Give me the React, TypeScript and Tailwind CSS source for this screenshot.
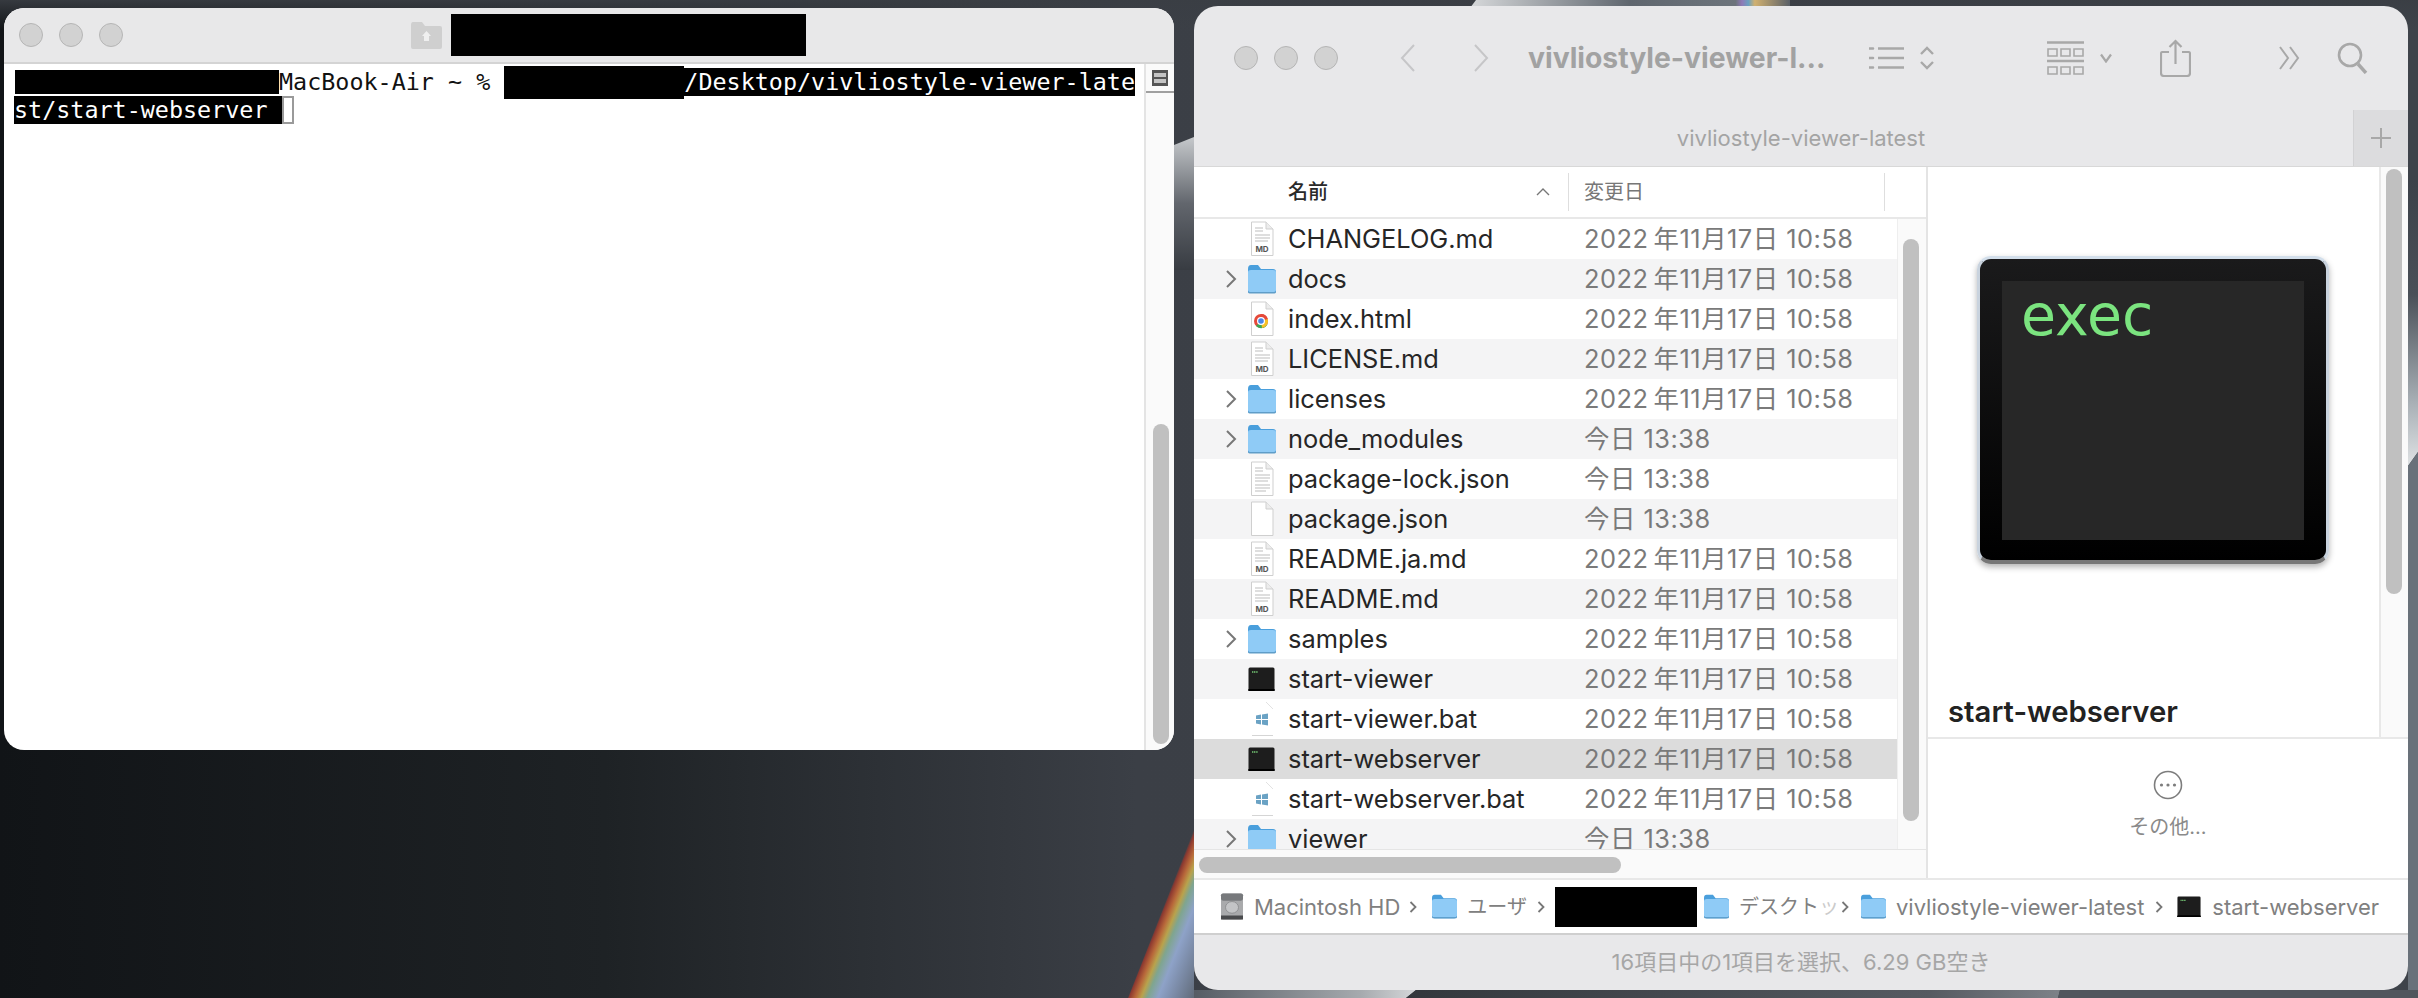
import React from "react";

type RowKind = "md" | "folder" | "html" | "lock" | "blank" | "term" | "bat";

interface Row {
    name: string;
    date: string;
    kind: RowKind;
}

const OLD = "2022\u2009年11月17日 10:58";
const TODAY = "今日 13:38";

const rows: Row[] = [
    {name: "CHANGELOG.md", date: OLD, kind: "md"},
    {name: "docs", date: OLD, kind: "folder"},
    {name: "index.html", date: OLD, kind: "html"},
    {name: "LICENSE.md", date: OLD, kind: "md"},
    {name: "licenses", date: OLD, kind: "folder"},
    {name: "node_modules", date: TODAY, kind: "folder"},
    {name: "package-lock.json", date: TODAY, kind: "lock"},
    {name: "package.json", date: TODAY, kind: "blank"},
    {name: "README.ja.md", date: OLD, kind: "md"},
    {name: "README.md", date: OLD, kind: "md"},
    {name: "samples", date: OLD, kind: "folder"},
    {name: "start-viewer", date: OLD, kind: "term"},
    {name: "start-viewer.bat", date: OLD, kind: "bat"},
    {name: "start-webserver", date: OLD, kind: "term"},
    {name: "start-webserver.bat", date: OLD, kind: "bat"},
    {name: "viewer", date: TODAY, kind: "folder"},
];

const Wallpaper = () => (
    <svg className="absolute inset-0" width="2418" height="998" viewBox="0 0 2418 998">
        <defs>
            <linearGradient id="base" x1="0" y1="0" x2="1" y2="0">
                <stop offset="0" stopColor="#111417"/>
                <stop offset="0.25" stopColor="#1e2225"/>
                <stop offset="0.47" stopColor="#3b3f46"/>
                <stop offset="1" stopColor="#3e434a"/>
            </linearGradient>
            <linearGradient id="topFade" x1="0" y1="0" x2="0" y2="1">
                <stop offset="0" stopColor="#3a3e44" stopOpacity="0.9"/>
                <stop offset="1" stopColor="#3a3e44" stopOpacity="0"/>
            </linearGradient>
            <linearGradient id="wedge" x1="0" y1="0" x2="0" y2="1">
                <stop offset="0" stopColor="#c6c9cc"/>
                <stop offset="0.5" stopColor="#62666d"/>
                <stop offset="1" stopColor="#383c42"/>
            </linearGradient>
            <linearGradient id="bow" gradientUnits="userSpaceOnUse" x1="1126" y1="998" x2="1191" y2="1024">
                <stop offset="0" stopColor="#3b3f46"/>
                <stop offset="0.04" stopColor="#8f3a30"/>
                <stop offset="0.12" stopColor="#b8683a"/>
                <stop offset="0.2" stopColor="#b9a24c"/>
                <stop offset="0.28" stopColor="#7fa58f"/>
                <stop offset="0.42" stopColor="#8ea2c8"/>
                <stop offset="1" stopColor="#586069"/>
            </linearGradient>
            <linearGradient id="rightBand" x1="0" y1="0" x2="0" y2="1">
                <stop offset="0" stopColor="#3c4149"/>
                <stop offset="0.4" stopColor="#4a5058"/>
                <stop offset="0.78" stopColor="#a9b0b6"/>
                <stop offset="1" stopColor="#dfe2e4"/>
            </linearGradient>
            <linearGradient id="bottomLight" x1="0" y1="0" x2="1" y2="0">
                <stop offset="0" stopColor="#565c64"/>
                <stop offset="0.75" stopColor="#a6aaae"/>
                <stop offset="1" stopColor="#d5d7d9"/>
            </linearGradient>
            <linearGradient id="bottomDark" x1="0" y1="0" x2="1" y2="0">
                <stop offset="0" stopColor="#33373c"/>
                <stop offset="0.8" stopColor="#555a61"/>
                <stop offset="1" stopColor="#7d8288"/>
            </linearGradient>
            <linearGradient id="topStreak" x1="0" y1="0" x2="1" y2="0">
                <stop offset="0" stopColor="#d6d8da"/>
                <stop offset="0.5" stopColor="#5f666e"/>
                <stop offset="0.83" stopColor="#6d747c"/>
                <stop offset="0.85" stopColor="#8f7ab8"/>
                <stop offset="0.87" stopColor="#6aa0c0"/>
                <stop offset="0.89" stopColor="#d0b070"/>
                <stop offset="1" stopColor="#5a6068"/>
            </linearGradient>
        </defs>
        <rect width="2418" height="998" fill="url(#base)"/>
        <rect width="2418" height="30" fill="url(#topFade)"/>
        <polygon points="1470,8 1476,0 1790,0 1790,8" fill="url(#topStreak)"/>
        <polygon points="1174,145 1194,137 1194,270 1174,270" fill="url(#wedge)"/>
        <polygon points="1194,830 1194,998 1128,998" fill="url(#bow)"/>
        <polygon points="2408,180 2418,180 2418,452 2408,466" fill="url(#rightBand)"/>
        <polygon points="2408,466 2418,452 2418,998 2408,998" fill="#69717a"/>
        <polygon points="1194,990 1416,990 1406,998 1194,998" fill="url(#bottomLight)"/>
        <polygon points="1416,990 2060,990 2058,998 1406,998" fill="url(#bottomDark)"/>
        <polygon points="2060,990 2408,990 2418,990 2418,998 2058,998" fill="#50565d"/>
    </svg>
);

const Lights = () => (
    <div className="flex gap-[16px]">
        <div className="h-[24px] w-[24px] rounded-full border border-[#b5b5b5] bg-[#d2d2d2]"/>
        <div className="h-[24px] w-[24px] rounded-full border border-[#b5b5b5] bg-[#d2d2d2]"/>
        <div className="h-[24px] w-[24px] rounded-full border border-[#b5b5b5] bg-[#d2d2d2]"/>
    </div>
);

const PageShape = ({children}: { children?: React.ReactNode }) => (
    <svg width="27" height="36" viewBox="0 0 27 36">
        <path d="M3.5 1H18L25 8V34.5H3.5Z" fill="#fff" stroke="#cfcfcf" strokeWidth="1"/>
        <path d="M18 1V8H25" fill="#ececec" stroke="#cfcfcf" strokeWidth="1"/>
        {children}
    </svg>
);

const Lines = ({dense}: { dense?: boolean }) => (
    <g stroke="#bdbdbd" strokeWidth="1">
        <path d="M7 7H15M7 10H15"/>
        <path d="M7 14H22M7 17H22M7 20H20"/>
        {dense && <path d="M7 24H22M7 27H22M7 30H18"/>}
    </g>
);

const FileIcon = ({kind}: { kind: RowKind }) => {
    if (kind === "folder") return <FolderIcon/>;
    if (kind === "term") return <TermIcon w={27} h={24}/>;
    if (kind === "md") {
        return (
            <PageShape>
                <Lines/>
                <text x="14" y="31" fontSize="8" fontWeight="700" textAnchor="middle" fill="#555"
                      fontFamily="Inter, sans-serif">MD</text>
            </PageShape>
        );
    }
    if (kind === "lock") {
        return <PageShape><Lines dense/></PageShape>;
    }
    if (kind === "html") {
        return (
            <PageShape>
                <circle cx="13" cy="20" r="7" fill="#e5493a"/>
                <path d="M13 20L19.5 23A7 7 0 0 1 8 25Z" fill="#3aa757"/>
                <path d="M13 13A7 7 0 0 1 19.8 18L13 20Z" fill="#e5493a"/>
                <path d="M19.8 18A7 7 0 0 1 14 27L13 20Z" fill="#f6c026"/>
                <circle cx="13" cy="20" r="3.4" fill="#4a86e8" stroke="#fff" strokeWidth="1.2"/>
            </PageShape>
        );
    }
    if (kind === "bat") {
        return (
            <svg width="27" height="36" viewBox="0 0 27 36">
                <path d="M3.5 1H18L25 8V34.5H3.5Z" fill="#fff"/>
                <path d="M18 1L25 8" stroke="#e2e2e2"/>
                <path d="M4 34.5H25" stroke="#d5d5d5"/>
                <path d="M8 14.5L13 13.6V18H8ZM14 13.4L20 12.4V18H14ZM8 19H13V23.4L8 22.5ZM14 19H20V24.6L14 23.6Z"
                      fill="#6aa2c4"/>
            </svg>
        );
    }
    return <PageShape/>;
};

const FolderIcon = ({w = 28, h = 30}: { w?: number; h?: number }) => (
    <svg width={w} height={h} viewBox="0 0 28 30" preserveAspectRatio="none">
        <path d="M0 5Q0 1 3 1H10L13 5H25Q28 5 28 8V27Q28 29 25 29H3Q0 29 0 27Z" fill="#4a9fdc"/>
        <path d="M0 8Q0 6 3 6H25Q28 6 28 8V26Q28 28 25 28H3Q0 28 0 26Z" fill="#8fcbf6"/>
        <path d="M0 26.5Q0 28 3 28H25Q28 28 28 26.5V28Q28 29.5 25 29.5H3Q0 29.5 0 28Z" fill="#5f9dc8"/>
    </svg>
);

const TermIcon = ({w, h}: { w: number; h: number }) => (
    <svg width={w} height={h} viewBox="0 0 27 24" preserveAspectRatio="none">
        <rect x="0.5" y="0.5" width="26" height="22.5" rx="1.5" fill="#1d1d1d"/>
        <rect x="0" y="22" width="27" height="2" rx="1" fill="#000"/>
        <path d="M4 5H10" stroke="#74c874" strokeWidth="1.6" strokeDasharray="1.2 .6"/>
    </svg>
);

const Chevron = ({color = "#777"}: { color?: string }) => (
    <svg width="12" height="20" viewBox="0 0 12 20" fill="none">
        <path d="M2 2L10 10L2 18" stroke={color} strokeWidth="2"/>
    </svg>
);

const PathSep = ({ml}: { ml: string }) => (
    <svg className={ml} width="8" height="14" viewBox="0 0 8 14" fill="none">
        <path d="M1.5 2L6.5 7L1.5 12" stroke="#777" strokeWidth="1.8"/>
    </svg>
);

const Toolbar = () => (
    <div className="flex h-[104px] shrink-0 items-center pl-[40px] text-[#a8a8a8]">
        <Lights/>
        <svg className="ml-[61px]" width="18" height="28" viewBox="0 0 18 28" fill="none">
            <path d="M15 1L3 14L15 27" stroke="#c6c6c8" strokeWidth="2"/>
        </svg>
        <svg className="ml-[55px]" width="18" height="28" viewBox="0 0 18 28" fill="none">
            <path d="M3 1L15 14L3 27" stroke="#c6c6c8" strokeWidth="2"/>
        </svg>
        <div
            className="ml-[38px] w-[299px] whitespace-nowrap text-[28.3px] font-bold leading-none text-[#a2a2a2]">
            vivliostyle-viewer-l...
        </div>
        <svg className="ml-[42px]" width="35" height="24" viewBox="0 0 35 24" fill="none">
            <g stroke="#a8a8a8" strokeWidth="2.6">
                <path d="M9 2.5H35M9 12H35M9 21.5H35"/>
                <path d="M0 2.5H4M0 12H4M0 21.5H4" strokeLinecap="round"/>
            </g>
        </svg>
        <svg className="ml-[15px]" width="16" height="24" viewBox="0 0 16 24" fill="none">
            <path d="M2 8L8 2L14 8M2 16L8 22L14 16" stroke="#a8a8a8" strokeWidth="2.4"/>
        </svg>
        <svg className="ml-[112px]" width="37" height="34" viewBox="0 0 37 34" fill="none" stroke="#a8a8a8">
            <path d="M0 1.5H37M0 20H37" strokeWidth="2.4"/>
            <path
                d="M1 8h9v7H1zM14 8h9v7h-9zM27 8h9v7h-9zM1 26h9v7H1zM14 26h9v7h-9zM27 26h9v7h-9z"
                strokeWidth="1.6"/>
        </svg>
        <svg className="ml-[16px]" width="12" height="10" viewBox="0 0 12 10" fill="none">
            <path d="M1 1.5L6 8.5L11 1.5" stroke="#a8a8a8" strokeWidth="2.2"/>
        </svg>
        <svg className="ml-[48px]" width="31" height="38" viewBox="0 0 31 38" fill="none" stroke="#a8a8a8"
             strokeWidth="2.2">
            <path d="M9 13H2Q1 13 1 15V34Q1 37 4 37H27Q30 37 30 34V15Q30 13 29 13H22"/>
            <path d="M15.5 25V2M9.5 8L15.5 2L21.5 8"/>
        </svg>
        <svg className="ml-[87px]" width="24" height="24" viewBox="0 0 24 24" fill="none">
            <path d="M2 1L10 12L2 23M12 1L20 12L12 23" stroke="#a8a8a8" strokeWidth="2"/>
        </svg>
        <svg className="ml-[35px]" width="31" height="32" viewBox="0 0 31 32" fill="none" stroke="#a8a8a8"
             strokeWidth="2.6">
            <circle cx="13" cy="13" r="11"/>
            <path d="M21 22L29 31" strokeWidth="3.4"/>
        </svg>
    </div>
);

const TabBar = () => (
    <div className="flex h-[56px] shrink-0">
        <div className="flex flex-1 items-center justify-center pl-[55px] text-[22px] text-[#a4a4a4]">
            vivliostyle-viewer-latest
        </div>
        <div className="flex w-[55px] items-center justify-center border-l border-[#d2d2d4] bg-[#dcdcde]">
            <svg width="22" height="22" viewBox="0 0 22 22" fill="none">
                <path d="M11 1V21M1 11H21" stroke="#a8a8a8" strokeWidth="2"/>
            </svg>
        </div>
    </div>
);

const FileList = () => (
    <div className="flex w-[732px] shrink-0 flex-col">
        <div className="flex h-[52px] shrink-0 items-center border-b-2 border-[#e8e8e8]">
            <div className="flex h-[38px] w-[375px] items-center justify-between border-r border-[#dedede] pl-[94px] pr-[18px]">
                <span className="text-[20px] font-medium text-[#2a2a2a]">名前</span>
                <svg width="14" height="8" viewBox="0 0 14 8" fill="none">
                    <path d="M1 7L7 1L13 7" stroke="#777" strokeWidth="1.4"/>
                </svg>
            </div>
            <div className="flex h-[38px] w-[316px] items-center border-r border-[#dedede] pl-[15px] text-[20px] text-[#777]">
                変更日
            </div>
        </div>
        <div className="flex h-[630px] shrink-0">
            <div className="w-[704px] shrink-0 overflow-hidden border-r border-[#eeeeee]">
                {rows.map((row, i) => (
                    <div
                        key={row.name}
                        className={
                            "flex h-[40px] items-center " +
                            (i === 13 ? "bg-[#dcdcdc]" : i % 2 === 1 ? "bg-[#f4f4f5]" : "bg-white")
                        }
                    >
                        <div className="flex w-[54px] shrink-0 justify-end pr-[11px]">
                            {row.kind === "folder" && <Chevron/>}
                        </div>
                        <div className="flex w-[40px] shrink-0 items-center">
                            <FileIcon kind={row.kind}/>
                        </div>
                        <div className="w-[296px] shrink-0 text-[25.4px] leading-none text-[#262626]">{row.name}</div>
                        <div className="whitespace-nowrap text-[25.4px] leading-none tracking-[0.5px] text-[#7a7a7a]">{row.date}</div>
                    </div>
                ))}
            </div>
            <div className="flex-1 bg-[#fafafa] pl-[5px] pt-[20px]">
                <div className="h-[582px] w-[16px] rounded-full bg-[#c0c0c0]"/>
            </div>
        </div>
        <div className="h-[30px] shrink-0 border-t border-[#e5e5e5] bg-[#fafafa] pl-[5px] pt-[7px]">
            <div className="h-[16px] w-[422px] rounded-full bg-[#c0c0c0]"/>
        </div>
    </div>
);

const Preview = () => (
    <div className="flex flex-1 flex-col border-l-2 border-[#e4e4e4]">
        <div className="flex h-[572px] shrink-0 border-b-2 border-[#e8e8e8]">
            <div className="w-[451px] shrink-0">
                <div
                    className="ml-[49px] mt-[89px] h-[308px] w-[352px] rounded-[14px] border-x-[3px] border-t-[3px] border-b-[4px] border-x-[#c9d3de] border-t-[#d3dfeb] border-b-[#777] bg-[linear-gradient(#1a1a1b,#000)] p-[22px] shadow-[0_3px_6px_rgba(0,0,0,0.3)]">
                    <div
                        className="h-[259px] w-[302px] bg-[#272727] pl-[19px] pt-[4px] font-['DejaVu_Sans',sans-serif] text-[57px] leading-[60px] text-[#7be47f]">
                        exec
                    </div>
                </div>
                <div className="ml-[20px] mt-[131px] text-[29.3px] font-semibold leading-[34px] text-[#222]">
                    start-webserver
                </div>
            </div>
            <div className="flex-1 border-l-2 border-[#e8e8e8] bg-[#fafafa] pl-[5px] pt-[2px]">
                <div className="h-[425px] w-[16px] rounded-full bg-[#c0c0c0]"/>
            </div>
        </div>
        <div className="flex flex-1 flex-col items-center">
            <svg className="mt-[31px]" width="30" height="30" viewBox="0 0 30 30" fill="none">
                <circle cx="15" cy="15" r="13.5" stroke="#7d7d7d" strokeWidth="1.6"/>
                <circle cx="8.5" cy="15" r="1.6" fill="#7d7d7d"/>
                <circle cx="15" cy="15" r="1.6" fill="#7d7d7d"/>
                <circle cx="21.5" cy="15" r="1.6" fill="#7d7d7d"/>
            </svg>
            <div className="mt-[14px] text-[20px] leading-[26px] text-[#8a8a8a]">その他...</div>
        </div>
    </div>
);

const PathBar = () => (
    <div
        className="flex h-[57px] shrink-0 items-center border-y-2 border-t-[#e8e8e8] border-b-[#cfcfcf] pl-[26px] text-[22px] leading-none text-[#808080]">
        <svg width="24" height="27" viewBox="0 0 24 30" preserveAspectRatio="none">
            <rect x="1" y="0.5" width="22" height="29" rx="2" fill="#a9aaac"/>
            <rect x="1" y="0.5" width="22" height="8" rx="2" fill="#77797c"/>
            <rect x="1" y="25" width="22" height="4.5" fill="#4a4b4d"/>
            <circle cx="12" cy="16" r="6.5" fill="#c3c4c6" stroke="#8e8f91"/>
        </svg>
        <span className="ml-[10px] whitespace-nowrap">Macintosh HD</span>
        <PathSep ml="ml-[9px]"/>
        <span className="ml-[15px]"><FolderIcon w={25} h={25}/></span>
        <span className="ml-[10px] whitespace-nowrap text-[20px]">ユーザ</span>
        <PathSep ml="ml-[10px]"/>
        <div className="ml-[10px] h-[40px] w-[142px] shrink-0 bg-black"/>
        <span className="ml-[7px]"><FolderIcon w={25} h={25}/></span>
        <span className="ml-[10px] whitespace-nowrap text-[20px]">デスクト<span className="opacity-40">ッ</span></span>
        <PathSep ml="ml-[2px]"/>
        <span className="ml-[12px]"><FolderIcon w={25} h={25}/></span>
        <span className="ml-[10px] whitespace-nowrap">vivliostyle-viewer-latest</span>
        <PathSep ml="ml-[11px]"/>
        <span className="ml-[14px]"><TermIcon w={24} h={21}/></span>
        <span className="ml-[11px] whitespace-nowrap">start-webserver</span>
    </div>
);

const FinderWindow = () => (
    <div
        className="absolute left-[1194px] top-[6px] flex h-[984px] w-[1214px] flex-col overflow-hidden rounded-[24px] bg-[#e8e8ea] font-['Inter','Noto_Sans_CJK_JP',sans-serif]">
        <Toolbar/>
        <TabBar/>
        <div className="flex h-[712px] shrink-0 border-t border-[#d8d8d8] bg-white">
            <FileList/>
            <Preview/>
        </div>
        <div className="bg-white"><PathBar/></div>
        <div className="flex flex-1 items-center justify-center text-[22px] text-[#a6a6a6]">
            16項目中の1項目を選択、6.29 GB空き
        </div>
    </div>
);

const TerminalWindow = () => (
    <div
        className="absolute left-[4px] top-[8px] flex h-[742px] w-[1170px] flex-col overflow-hidden rounded-[20px] bg-white">
        <div className="flex h-[56px] shrink-0 items-center border-b-2 border-[#d4d4d4] bg-[#e8e8e9] pl-[15px]">
            <Lights/>
            <svg className="ml-[288px]" width="31" height="28" viewBox="0 0 31 28">
                <path d="M0 4Q0 1 2 1H11L14 5H29Q31 5 31 7V26Q31 28 29 28H2Q0 28 0 26Z" fill="#cfcfcf"/>
                <path d="M15.5 10L20 15H18V20H13V15H11Z" fill="#efefef"/>
            </svg>
            <div className="ml-[9px] h-[42px] w-[355px] shrink-0 bg-black"/>
        </div>
        <div className="flex min-h-0 flex-1">
            <div
                className="w-[1140px] shrink-0 pl-[11px] pt-[4px] font-['DejaVu_Sans_Mono',monospace] text-[23.4px] leading-[28px] text-[#111]">
                <div className="flex h-[28px] items-center whitespace-pre">
                    <div className="h-[24px] w-[264px] shrink-0 bg-black"/>
                    <span>MacBook-Air ~ % </span>
                    <div className="h-[33px] w-[180px] shrink-0 bg-black"/>
                    <span className="bg-black text-white">/Desktop/vivliostyle-viewer-late</span>
                </div>
                <div className="-ml-px flex h-[28px] items-center whitespace-pre">
                    <span className="bg-black text-white">st/start-webserver </span>
                    <div className="h-[28px] w-[12px] shrink-0 border-2 border-[#9a9a9a] bg-white"/>
                </div>
            </div>
            <div className="flex flex-1 flex-col border-l-2 border-[#e4e4e4] bg-[#fafafa]">
                <div className="flex h-[29px] shrink-0 items-start justify-start border-b-2 border-[#a0a0a0] pl-[6px] pt-[6px]">
                    <div className="flex h-[16px] w-[16px] flex-col justify-center gap-[2px] bg-[#555] px-[2px]">
                        <div className="h-[4px] bg-[#c4c4c4]"/>
                        <div className="h-[4px] bg-[#c4c4c4]"/>
                    </div>
                </div>
                <div className="ml-[7px] mt-[331px] h-[320px] w-[16px] rounded-full bg-[#c0c0c0]"/>
            </div>
        </div>
    </div>
);

const App: React.FC = () => {
    return (
        <div className="relative h-[998px] w-[2418px] overflow-hidden">
            <Wallpaper/>
            <TerminalWindow/>
            <FinderWindow/>
        </div>
    );
};

export default App;
